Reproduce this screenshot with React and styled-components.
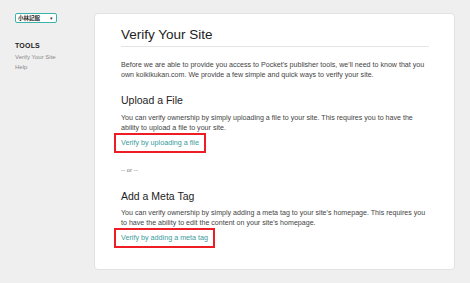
import React from 'react';
import styled, { createGlobalStyle } from 'styled-components';

const GlobalStyle = createGlobalStyle`
  html, body {
    margin: 0;
    padding: 0;
    background: #efefef;
    font-family: "Liberation Sans", Arial, "Noto Sans CJK JP", sans-serif;
  }
`;

const Page = styled.div`
  display: flex;
  align-items: flex-start;
  width: 470px;
  height: 283px;
  box-sizing: border-box;
  padding-top: 13px;
`;

const Sidebar = styled.aside`
  width: 79px;
  padding-left: 15px;
  flex-shrink: 0;
`;

const Select = styled.div`
  display: flex;
  align-items: center;
  justify-content: space-between;
  width: 42px;
  height: 10px;
  box-sizing: border-box;
  border: 1.5px solid #3bb3a8;
  border-radius: 2px;
  background: #fff;
  padding: 0 3px 0 2px;
  overflow: hidden;
`;

const SelectText = styled.span`
  font-family: "Noto Sans CJK JP", sans-serif;
  font-size: 5.5px;
  font-weight: bold;
  line-height: 7px;
  color: #222;
  white-space: nowrap;
`;

const Caret = styled.span`
  font-size: 5px;
  line-height: 7px;
  color: #333;
`;

const NavTitle = styled.div`
  margin-top: 18px;
  font-size: 7px;
  line-height: 10px;
  font-weight: bold;
  color: #222;
  letter-spacing: 0.2px;
`;

const NavLink = styled.div`
  margin-top: ${({ top }) => top || 0}px;
  font-size: 6px;
  line-height: 10px;
  color: #8a8a8a;
`;

const Card = styled.main`
  width: 361px;
  height: 257px;
  box-sizing: border-box;
  background: #fff;
  border: 1px solid #e2e2e2;
  border-radius: 4px;
  padding: 13px 26px 0 26px;
`;

const Title = styled.h1`
  margin: 0;
  width: 308px;
  font-size: 13.5px;
  line-height: 16px;
  font-weight: normal;
  color: #222;
  padding-bottom: 3px;
  border-bottom: 1px solid #e4e4e4;
`;

const Text = styled.p`
  margin: ${({ top }) => top}px 0 0;
  width: 320px;
  font-size: 7.1px;
  line-height: 10px;
  color: #444;
  white-space: nowrap;
`;

const Heading = styled.h2`
  margin: ${({ top }) => top}px 0 0;
  font-size: 10.5px;
  line-height: 14px;
  font-weight: normal;
  color: #222;
`;

const VerifyLink = styled.a`
  display: block;
  width: fit-content;
  margin-left: -7px;
  padding: 3px 5px;
  border: 2px solid #ee1c24;
  font-size: 7.2px;
  line-height: 10px;
  color: #3a9b9b;
  text-decoration: none;
`;

const Or = styled.div`
  margin-top: 12px;
  font-size: 6px;
  line-height: 10px;
  color: #777;
`;

const App = () => (
  <>
    <GlobalStyle />
    <Page>
      <Sidebar>
        <Select>
          <SelectText>小林記館</SelectText>
          <Caret>▾</Caret>
        </Select>
        <NavTitle>TOOLS</NavTitle>
        <NavLink top={1}>Verify Your Site</NavLink>
        <NavLink>Help</NavLink>
      </Sidebar>
      <Card>
        <Title>Verify Your Site</Title>
        <Text top={13}>
          Before we are able to provide you access to Pocket&apos;s publisher tools, we&apos;ll need to know that you
          <br />
          own koikikukan.com. We provide a few simple and quick ways to verify your site.
        </Text>
        <Heading top={13}>Upload a File</Heading>
        <Text top={6}>
          You can verify ownership by simply uploading a file to your site. This requires you to have the
          <br />
          ability to upload a file to your site.
        </Text>
        <VerifyLink href="#upload">Verify by uploading a file</VerifyLink>
        <Or>-- or --</Or>
        <Heading top={14}>Add a Meta Tag</Heading>
        <Text top={5}>
          You can verify ownership by simply adding a meta tag to your site&apos;s homepage. This requires you
          <br />
          to have the ability to edit the content on your site&apos;s homepage.
        </Text>
        <VerifyLink href="#meta">Verify by adding a meta tag</VerifyLink>
      </Card>
    </Page>
  </>
);

export default App;
